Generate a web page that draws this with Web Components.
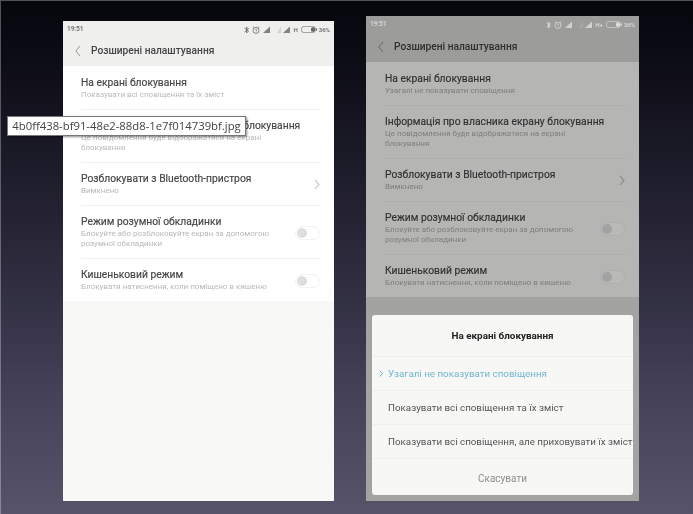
<!DOCTYPE html>
<html lang="uk"><head><meta charset="utf-8"><title>Розширені налаштування</title>
<style>
html,body{margin:0;padding:0;height:100%}
body{font-family:Roboto,"Liberation Sans",sans-serif;overflow:hidden}
</style></head><body>
<x-page>
  <x-phone>
    <x-status time="19:51" net="H"></x-status>
    <x-appbar>Розширені налаштування</x-appbar>
    <x-list>
      <x-row title="На екрані блокування"><span>Показувати всі сповіщення та їх зміст</span></x-row>
      <x-row title="Інформація про власника екрану блокування"><span>Це повідомлення буде відображатися на екрані<br>блокування</span></x-row>
      <x-row title="Розблокувати з Bluetooth-пристроя" trail="chevron"><span>Вимкнено</span></x-row>
      <x-row title="Режим розумної обкладинки" trail="toggle"><span>Блокуйте або розблоковуйте екран за допомогою<br>розумної обкладинки</span></x-row>
      <x-row title="Кишеньковий режим" trail="toggle" last><span>Блокувати натиснення, коли поміщено в кишеню</span></x-row>
    </x-list>
  </x-phone>
  <x-phone dim>
    <x-status time="19:51" net="H+"></x-status>
    <x-appbar>Розширені налаштування</x-appbar>
    <x-list>
      <x-row title="На екрані блокування"><span>Узагалі не показувати сповіщення</span></x-row>
      <x-row title="Інформація про власника екрану блокування"><span>Це повідомлення буде відображатися на екрані<br>блокування</span></x-row>
      <x-row title="Розблокувати з Bluetooth-пристроя" trail="chevron"><span>Вимкнено</span></x-row>
      <x-row title="Режим розумної обкладинки" trail="toggle"><span>Блокуйте або розблоковуйте екран за допомогою<br>розумної обкладинки</span></x-row>
      <x-row title="Кишеньковий режим" trail="toggle" last><span>Блокувати натиснення, коли поміщено в кишеню</span></x-row>
    </x-list>
    <x-dialog slot="overlay" heading="На екрані блокування" cancel="Скасувати">
      <x-option selected>Узагалі не показувати сповіщення</x-option>
      <x-option>Показувати всі сповіщення та їх зміст</x-option>
      <x-option>Показувати всі сповіщення, але приховувати їх зміст</x-option>
    </x-dialog>
  </x-phone>
  <x-tooltip>4b0ff438-bf91-48e2-88d8-1e7f014739bf.jpg</x-tooltip>
</x-page>
<script>
const make=(name,css,html)=>customElements.define(name,class extends HTMLElement{
  connectedCallback(){
    if(this.shadowRoot)return;
    const r=this.attachShadow({mode:'open'});
    const a=n=>this.getAttribute(n)||'';
    r.innerHTML=`<style>${css}</style>`+(typeof html==='function'?html(a,this):html);
  }
});
make('x-page',`:host{display:flex;align-items:flex-end;gap:32px;box-sizing:border-box;width:693px;height:514px;padding:0 0 13px 63px;position:relative;
  background:linear-gradient(180deg,#06060d 0,#0b0b14 50px,#1d1c2a 170px,#2f2d3f 280px,#45425a 400px,#575369 514px);
  box-shadow:inset 1px 1px 0 rgba(255,255,255,.3)}`,`<slot></slot>`);
make('x-phone',`:host{display:flex;flex-direction:column;width:271px;height:480px;background:#f8f8f7;position:relative;overflow:hidden;
   --pad:18px;--bar:#efefee;--list:#fff;--title:#444;--sub:#b8b8b8;--line:#f2f2f2;--status:#666;--head:#444;--track:#fff;--knob:#dedede;--tline:#f2f2f2;--chev:#d0d0d0;--hh:29px;--back:#8a8a8a}
  :host([dim]){width:273px;height:485px;background:#a3a3a1;
   --pad:19px;--bar:#9c9c9a;--list:#b5b5b3;--title:#303030;--sub:#7e7e7e;--line:#acacaa;--status:#dedede;--head:#2f2f2f;--track:#b9b9b7;--knob:#a2a2a2;--tline:#aeaeac;--chev:#8f8f8f;--hh:30px;--back:#5c5c5c}
  .in{filter:blur(.5px);display:flex;flex-direction:column;flex:1}`,
  `<div class="in"><slot></slot></div><slot name="overlay"></slot>`);
make('x-status',`:host{display:flex;align-items:center;height:16px;padding:1px 4px 0 4px;background:var(--bar);color:var(--status);font:500 6px/1 Roboto,sans-serif;box-sizing:border-box}
  .t{margin-right:auto;font-size:6.5px}svg{display:block;flex:none}.b{margin:0 2px 0 3px}.bt{margin-right:3px}.al{margin-right:3px}.s1{margin-right:3px}.s2{margin-right:1px}.s3{margin-right:2px}`,
  a=>`<span class="t">${a('time')}</span>
  <svg class="bt" width="5" height="8" viewBox="0 0 5 8" fill="none" stroke="currentColor" stroke-width=".8"><path d="M.5 2l4 3-2 2V1l2 2-4 3"/></svg>
  <svg class="al" width="8" height="8" viewBox="0 0 8 8" fill="none" stroke="currentColor" stroke-width=".8"><circle cx="4" cy="4.4" r="3"/><path d="M4 2.8v1.7l1 .6M.8 1.6L2 .6M7.2 1.6L6 .6"/></svg>
  <svg class="s1" width="8" height="7" viewBox="0 0 8 7" fill="currentColor"><path d="M0 7L7 .5V7z" opacity=".8"/></svg>
  <svg class="s2" width="8" height="7" viewBox="0 0 8 7" fill="currentColor" opacity=".2"><path d="M3 7L7 .5V7z"/></svg>
  <svg class="s3" width="8" height="7" viewBox="0 0 8 7" fill="currentColor"><path d="M0 7L7 .5V7z" opacity=".8"/></svg>
  <span>${a('net')}</span>
  <svg class="b" width="16" height="7" viewBox="0 0 16 7"><rect x=".4" y=".4" width="14" height="6.2" rx="2.6" fill="none" stroke="currentColor" stroke-width=".6"/><rect x="10" y="1.2" width="4" height="4.6" rx="1.6" fill="currentColor"/><rect x="15" y="2.4" width="1" height="2.2" fill="currentColor"/></svg>
  <span>36%</span>`);
make('x-appbar',`:host{display:flex;align-items:center;height:var(--hh);padding-bottom:1px;box-sizing:border-box;background:var(--bar);color:var(--head);font:500 10.2px/14px Roboto,sans-serif}
  svg{margin:0 10px 0 12px}`,`<svg width="6" height="12" viewBox="0 0 6 12" fill="none" stroke="var(--back)" stroke-width=".9"><path d="M5 1L.8 6 5 11"/></svg><slot></slot>`);
make('x-list',`:host{display:block;background:var(--list)}`,`<slot></slot>`);
make('x-row',`:host{display:block;padding:0 14px 0 var(--pad)}
  .r{display:flex;align-items:center;justify-content:space-between;padding:10px 0 9px;border-bottom:1px solid var(--line);margin-bottom:-1px}
  :host([last]) .r{border-bottom-color:transparent}
  .t{font:400 10.3px/14px Roboto,sans-serif;-webkit-text-stroke:.15px currentColor;color:var(--title);white-space:nowrap}
  .s{font:400 8px/10px Roboto,sans-serif;color:var(--sub);white-space:nowrap}
  .tr{flex:none;margin-top:1px}`,
  a=>`<div class="r"><div><div class="t">${a('title')}</div><div class="s"><slot></slot></div></div>
  ${a('trail')==='chevron'?'<svg class="tr" width="6" height="11" viewBox="0 0 6 11" fill="none" stroke="var(--chev)" stroke-width="1.3"><path d="M1 1l4 4.5L1 10"/></svg>':a('trail')==='toggle'?'<x-toggle class="tr"></x-toggle>':''}</div>`);
make('x-toggle',`:host{display:block;width:25px;height:14px;box-sizing:border-box;border:1px solid var(--tline);border-radius:7px;background:var(--track);position:relative}
  i{position:absolute;left:1px;top:1px;width:10px;height:10px;border-radius:50%;background:var(--knob)}`,`<i></i>`);
make('x-dialog',`:host{position:absolute;left:6px;right:6px;bottom:6px;height:180px;background:#f7f7f6;border-radius:3px;display:flex;flex-direction:column;overflow:hidden;filter:blur(.5px)}
  .h{height:42px;flex:none;display:flex;align-items:center;justify-content:center;font:700 9.9px/14px Roboto,sans-serif;color:#222;border-bottom:1px solid #efefef;box-sizing:border-box}
  .c{flex:1;display:flex;align-items:center;justify-content:center;padding-top:3px;font:400 10px/14px Roboto,sans-serif;color:#8f8f8f}`,
  a=>`<div class="h">${a('heading')}</div><slot></slot><div class="c">${a('cancel')}</div>`);
make('x-option',`:host{display:flex;align-items:center;height:34px;flex:none;box-sizing:border-box;border-bottom:1px solid #efefef;padding-left:16px;position:relative;font:400 9.8px/14px Roboto,sans-serif;color:#555;white-space:nowrap}
  :host([selected]){color:#73b7cf}
  svg{position:absolute;left:7px;top:13px}`,
  (a,el)=>`${el.hasAttribute('selected')?'<svg width="4" height="7" viewBox="0 0 4 7" fill="none" stroke="#73b7cf" stroke-width="1"><path d="M.5.5l3 3-3 3"/></svg>':''}<slot></slot>`);
make('x-tooltip',`:host{position:absolute;left:7px;top:116px;width:239px;height:20px;box-sizing:border-box;background:#fff;border:1px solid #777;box-shadow:1px 1px 2px rgba(0,0,0,.45);display:flex;align-items:center;justify-content:center;font:400 11.3px/1 "Open Sans",sans-serif;color:#444;white-space:nowrap}`,`<slot></slot>`);
</script>
</body></html>
